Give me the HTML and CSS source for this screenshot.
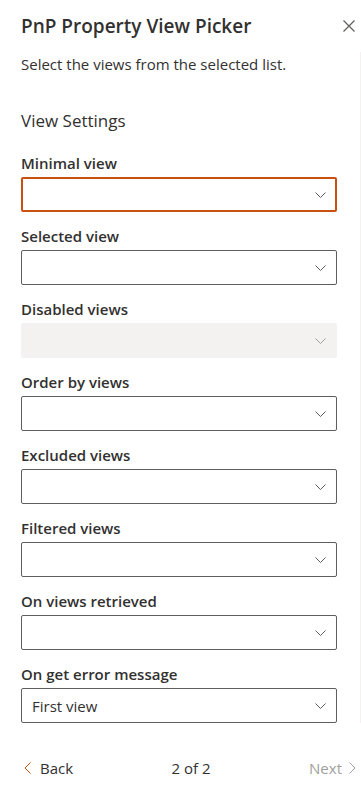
FILE: index.html
```html
<!DOCTYPE html>
<html lang="en">
<head>
    <meta charset="UTF-8">
    <meta name="viewport" content="width=device-width, initial-scale=1.0">
    <title>PnP Property View Picker</title>
    <link rel="stylesheet" href="styles.css">
</head>
<body>
    <div class="panel">
        <div class="panel-header">
            <h1 class="panel-title">PnP Property View Picker</h1>
            <button class="close-btn" aria-label="Close">
                <svg width="12" height="12" viewBox="0 0 12 12"><path d="M0.5 0.5L11.5 11.5M11.5 0.5L0.5 11.5" stroke="#605e5c" stroke-width="1.2" fill="none"/></svg>
            </button>
        </div>
        <div class="panel-body">
            <p class="description">Select the views from the selected list.</p>
            <h2 class="group-title">View Settings</h2>

            <div class="field">
                <label class="field-label">Minimal view</label>
                <div class="dropdown focused">
                    <span class="dropdown-text"></span>
                    <svg class="chevron" width="11" height="6" viewBox="0 0 11 6"><path d="M0.5 0.5L5.5 5.5L10.5 0.5" stroke="#605e5c" fill="none"/></svg>
                </div>
            </div>
            <div class="field">
                <label class="field-label">Selected view</label>
                <div class="dropdown">
                    <span class="dropdown-text"></span>
                    <svg class="chevron" width="11" height="6" viewBox="0 0 11 6"><path d="M0.5 0.5L5.5 5.5L10.5 0.5" stroke="#605e5c" fill="none"/></svg>
                </div>
            </div>
            <div class="field">
                <label class="field-label">Disabled views</label>
                <div class="dropdown disabled">
                    <span class="dropdown-text"></span>
                    <svg class="chevron" width="11" height="6" viewBox="0 0 11 6"><path d="M0.5 0.5L5.5 5.5L10.5 0.5" stroke="#a19f9d" fill="none"/></svg>
                </div>
            </div>
            <div class="field">
                <label class="field-label">Order by views</label>
                <div class="dropdown">
                    <span class="dropdown-text"></span>
                    <svg class="chevron" width="11" height="6" viewBox="0 0 11 6"><path d="M0.5 0.5L5.5 5.5L10.5 0.5" stroke="#605e5c" fill="none"/></svg>
                </div>
            </div>
            <div class="field">
                <label class="field-label">Excluded views</label>
                <div class="dropdown">
                    <span class="dropdown-text"></span>
                    <svg class="chevron" width="11" height="6" viewBox="0 0 11 6"><path d="M0.5 0.5L5.5 5.5L10.5 0.5" stroke="#605e5c" fill="none"/></svg>
                </div>
            </div>
            <div class="field">
                <label class="field-label">Filtered views</label>
                <div class="dropdown">
                    <span class="dropdown-text"></span>
                    <svg class="chevron" width="11" height="6" viewBox="0 0 11 6"><path d="M0.5 0.5L5.5 5.5L10.5 0.5" stroke="#605e5c" fill="none"/></svg>
                </div>
            </div>
            <div class="field">
                <label class="field-label">On views retrieved</label>
                <div class="dropdown">
                    <span class="dropdown-text"></span>
                    <svg class="chevron" width="11" height="6" viewBox="0 0 11 6"><path d="M0.5 0.5L5.5 5.5L10.5 0.5" stroke="#605e5c" fill="none"/></svg>
                </div>
            </div>
            <div class="field">
                <label class="field-label">On get error message</label>
                <div class="dropdown">
                    <span class="dropdown-text">First view</span>
                    <svg class="chevron" width="11" height="6" viewBox="0 0 11 6"><path d="M0.5 0.5L5.5 5.5L10.5 0.5" stroke="#605e5c" fill="none"/></svg>
                </div>
            </div>
        </div>
        <div class="pager">
            <button class="pager-btn back">
                <svg width="7" height="12" viewBox="0 0 7 12"><path d="M6.5 0.5L1 6L6.5 11.5" stroke="#ca5010" fill="none"/></svg>
                <span>Back</span>
            </button>
            <span class="pager-count">2 of 2</span>
            <button class="pager-btn next" disabled>
                <span>Next</span>
                <svg width="7" height="12" viewBox="0 0 7 12"><path d="M0.5 0.5L6 6L0.5 11.5" stroke="#a19f9d" fill="none"/></svg>
            </button>
        </div>
    </div>
</body>
</html>
```

FILE: styles.css
```css
body {
    margin: 0;
    font-family: 'Open Sans', 'Noto Sans', sans-serif;
    color: #323130;
    background: #ffffff;
}

.panel {
    width: 361px;
    height: 792px;
    display: flex;
    flex-direction: column;
}

.panel-header {
    display: flex;
    justify-content: space-between;
    align-items: flex-start;
    padding: 12px 0 0 21px;
    height: 40px;
    box-sizing: border-box;
}

.panel-title {
    margin: 0;
    font-size: 19px;
    font-weight: 600;
    line-height: 28px;
    color: #323130;
}

.close-btn {
    border: none;
    background: none;
    padding: 8px 6px 0 0;
    cursor: pointer;
}

.panel-body {
    margin-top: 12px;
    padding: 0 23px 0 21px;
    border-right: 1px solid #f3f2f1;
    height: 671px;
    box-sizing: border-box;
}

.description {
    margin: 0;
    font-size: 15px;
    line-height: 20px;
    padding-top: 2px;
}

.group-title {
    margin: 35px 0 6px;
    font-size: 17px;
    font-weight: 400;
    line-height: 24px;
}

.field-label {
    display: block;
    font-size: 15px;
    font-weight: 600;
    line-height: 20px;
    padding: 14px 0 4px;
}

.dropdown {
    height: 35px;
    box-sizing: border-box;
    border: 1px solid #605e5c;
    border-radius: 2px;
    display: flex;
    align-items: center;
    justify-content: space-between;
    padding: 0 10px 0 10px;
    font-size: 15px;
}

.dropdown.focused {
    border: 2px solid #ca5010;
    padding: 0 9px;
}

.dropdown.disabled {
    border: none;
    background: #f3f2f1;
    padding: 0 11px;
}

.pager {
    display: flex;
    align-items: center;
    justify-content: space-between;
    padding: 35px 5px 0 24px;
    font-size: 15px;
}

.pager-btn {
    display: flex;
    align-items: center;
    gap: 9px;
    border: none;
    background: none;
    padding: 0;
    font-family: inherit;
    font-size: 15px;
    line-height: 20px;
    color: #323130;
    cursor: pointer;
}

.pager-btn.next {
    color: #a19f9d;
    gap: 7px;
}

.pager-count {
    line-height: 20px;
}
```
